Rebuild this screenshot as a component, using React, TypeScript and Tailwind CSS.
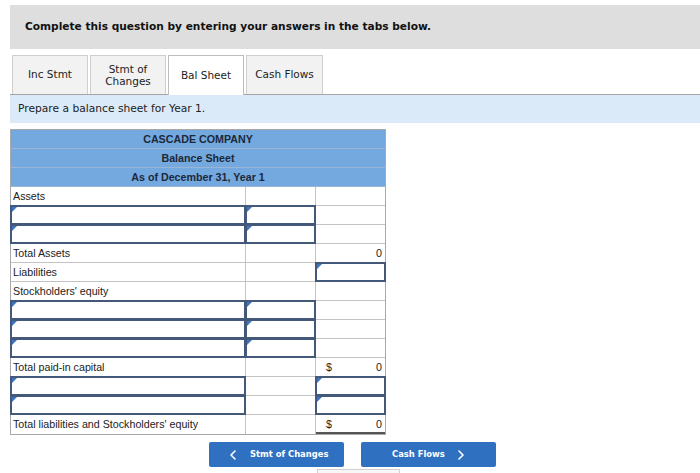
import React from "react";

type Cell = { t?: string; input?: boolean; dollar?: boolean; val?: string; strong?: boolean };

const Tri = () => (
  <span className="absolute left-0 top-0 w-0 h-0 border-t-[5px] border-t-[#3d75c4] border-r-[5px] border-r-transparent" />
);

function Row({ cells, last }: { cells: Cell[]; last?: boolean }) {
  return (
    <div className={`grid grid-cols-[235px_70px_69px] h-[19px] ${last ? "" : "border-b border-[#c4c4c4]"}`}>
      {cells.map((c, i) => (
        <div
          key={i}
          className={`relative h-full ${i < 2 ? "border-r border-[#c4c4c4]" : ""} ${c.strong ? "border-b-2 border-b-[#555]" : ""}`}
        >
          {c.input ? (
            <div className="absolute inset-[-1px] border-2 border-[#44597a] bg-white">
              <Tri />
            </div>
          ) : null}
          {c.t ? <span className="absolute left-[2px] top-[2px] leading-[14px]">{c.t}</span> : null}
          {c.dollar ? <span className="absolute left-[10px] top-[2px] leading-[14px]">$</span> : null}
          {c.val ? <span className="absolute right-[3px] top-[2px] leading-[14px]">{c.val}</span> : null}
        </div>
      ))}
    </div>
  );
}

const Chev = ({ dir }: { dir: "l" | "r" }) => (
  <svg width="6" height="10" viewBox="0 0 6 10" fill="none" stroke="white" strokeWidth="1.6" strokeLinecap="round" strokeLinejoin="round">
    {dir === "l" ? <path d="M5 1 L1 5 L5 9" /> : <path d="M1 1 L5 5 L1 9" />}
  </svg>
);

export default function App() {
  const rows: Cell[][] = [
    [{ t: "Assets" }, {}, {}],
    [{ input: true }, { input: true }, {}],
    [{ input: true }, { input: true }, {}],
    [{ t: "Total Assets" }, {}, { val: "0" }],
    [{ t: "Liabilities" }, {}, { input: true }],
    [{ t: "Stockholders' equity" }, {}, {}],
    [{ input: true }, { input: true }, {}],
    [{ input: true }, { input: true }, {}],
    [{ input: true }, { input: true }, {}],
    [{ t: "Total paid-in capital" }, {}, { dollar: true, val: "0" }],
    [{ input: true }, {}, { input: true }],
    [{ input: true }, {}, { input: true }],
    [{ t: "Total liabilities and Stockholders' equity" }, {}, { dollar: true, val: "0", strong: true }],
  ];
  const verdana = { fontFamily: '"DejaVu Sans", Verdana, sans-serif' };
  return (
    <div className="w-[700px] h-[473px] bg-white overflow-hidden relative text-[#222]">
      <div className="pt-[5px] pl-[10px]">
        <div className="h-[44px] bg-[#dedede] flex items-center pl-[15px]">
          <span className="font-bold text-[10.6px] text-[#111]" style={verdana}>
            Complete this question by entering your answers in the tabs below.
          </span>
        </div>
      </div>
      <div className="mt-[6px] pl-[12px] flex h-[39px] items-end" style={verdana}>
        <div className="w-[76px] h-[39px] bg-[#f2f2f2] border border-b-0 border-[#cfcfcf] flex items-center justify-center text-[10.5px]">Inc Stmt</div>
        <div className="ml-[2px] w-[76px] h-[39px] bg-[#f2f2f2] border border-b-0 border-[#cfcfcf] flex items-center justify-center text-[10.5px] leading-[12px] text-center">
          Stmt of<br />Changes
        </div>
        <div className="ml-[2px] w-[76px] h-[40px] bg-white border border-b-0 border-[#bdbdbd] flex items-center justify-center text-[10.5px] relative top-[1px] z-10">Bal Sheet</div>
        <div className="ml-[2px] w-[77px] h-[39px] bg-[#f2f2f2] border border-b-0 border-[#cfcfcf] flex items-center justify-center text-[10.5px]">Cash Flows</div>
      </div>
      <div className="ml-[10px] h-[29px] bg-[#dbeaf8] border-t border-[#a4a4a4] flex items-center pl-[8px] text-[10.7px]" style={verdana}>
        Prepare a balance sheet for Year 1.
      </div>
      <div
        className="mt-[6px] ml-[10px] w-[376px] border border-[#a8a8a8] text-[10.7px]"
        style={{ fontFamily: '"Liberation Sans", Arial, sans-serif' }}
      >
        {["CASCADE COMPANY", "Balance Sheet", "As of December 31, Year 1"].map((h) => (
          <div key={h} className="h-[19px] bg-[#74a9df] border-b border-[#9bb6d4] flex items-center justify-center font-bold text-[#1c2838]">
            {h}
          </div>
        ))}
        {rows.map((r, i) => (
          <Row key={i} cells={r} last={i === rows.length - 1} />
        ))}
      </div>
      <div className="mt-[7px] flex" style={verdana}>
        <div className="ml-[209px] w-[135px] h-[25px] bg-[#3070c0] rounded-[2px] flex items-center text-white font-bold text-[8.4px]">
          <span className="ml-[21px] flex"><Chev dir="l" /></span>
          <span className="ml-[14px]">Stmt of Changes</span>
        </div>
        <div className="ml-[17px] w-[135px] h-[25px] bg-[#3070c0] rounded-[2px] flex items-center text-white font-bold text-[8.4px]">
          <span className="ml-[31px]">Cash Flows</span>
          <span className="ml-[13px] flex"><Chev dir="r" /></span>
        </div>
      </div>
      <div className="mt-[2px] ml-[317px] w-[83px] h-[8px] border border-[#d0d0d0] bg-[#f7f7f7]" />
    </div>
  );
}
